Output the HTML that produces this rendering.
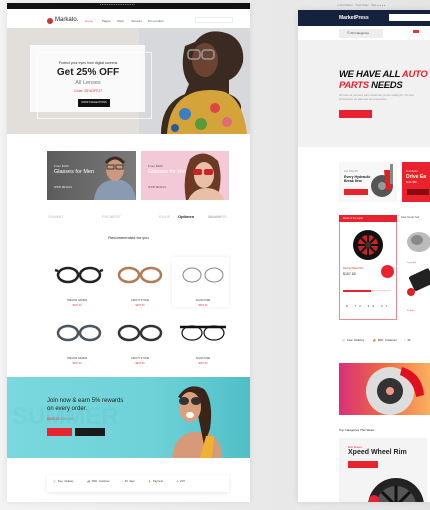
<!DOCTYPE html>
<html><head><meta charset="utf-8"><style>
*{margin:0;padding:0;box-sizing:border-box}
body{width:430px;height:510px;overflow:hidden;background:linear-gradient(90deg,#f3f3f3,#e9e9e9 60%,#e4e4e4);font-family:"Liberation Sans",sans-serif;position:relative}
.a{position:absolute}
.t{position:absolute;white-space:nowrap}
</style></head><body>
<div class="a" style="left:7px;top:3px;width:243px;height:499px;background:#fff;box-shadow:0 0 6px rgba(0,0,0,.08)"></div>
<div class="a" style="left:7px;top:3px;width:243px;height:6px;background:#111"></div>
<div class="t" style="left:100px;top:4px;font-size:2px;color:#ccc">● ● ● ● ●  ● ● ● ● ● ● ●   ● ● ● ● ● ● ● ●</div>
<div class="a" style="left:47px;top:18px;width:6px;height:6px;border-radius:50%;background:#c33"></div>
<div class="t" style="left:55px;top:17px;font-size:6px;color:#222">Markato.</div>
<div class="t" style="left:85px;top:19px;font-size:3px;color:#e55">Home</div>
<div class="t" style="left:102px;top:19px;font-size:3px;color:#555">Pages</div>
<div class="t" style="left:117px;top:19px;font-size:3px;color:#555">Shop</div>
<div class="t" style="left:131px;top:19px;font-size:3px;color:#555">Vendors</div>
<div class="t" style="left:148px;top:19px;font-size:3px;color:#555">Pro product</div>
<div class="a" style="left:195px;top:17px;width:38px;height:6px;border:1px solid #eee"></div>
<div class="a" style="left:7px;top:28px;width:132px;height:106px;background:#e2dfdb"></div>
<div class="a" style="left:139px;top:28px;width:111px;height:106px;background:#d6d8db"></div>
<svg class="a" style="left:155px;top:28px" width="95" height="106">
<path d="M40 14 q12-16 34-8 q16 8 14 28 q-4 14-14 18 l0 14 q10 4 12 12 l0 28 -80 0 q0-30 24-40 l4-10 q-10-14-4-38z" fill="#3a2a22"/>
<ellipse cx="50" cy="32" rx="13" ry="17" fill="#6b4330"/>
<path d="M12 106 q2-34 28-42 q16-4 30 0 q18 8 22 42z" fill="#d4a43a"/>
<circle cx="30" cy="86" r="6" fill="#3a7fc0"/><circle cx="60" cy="80" r="5" fill="#d44"/><circle cx="46" cy="96" r="6" fill="#5a9a3a"/><circle cx="72" cy="94" r="5" fill="#e06a7a"/><circle cx="20" cy="100" r="4" fill="#2a5a9a"/>
<rect x="33" y="22" width="12" height="9" rx="3" fill="none" stroke="#999" stroke-width="1.5"/><rect x="47" y="22" width="12" height="9" rx="3" fill="none" stroke="#999" stroke-width="1.5"/>
</svg>
<div class="a" style="left:30px;top:45px;width:115px;height:67px;background:rgba(255,255,255,.85)"></div>
<div class="a" style="left:37px;top:52px;width:115px;height:67px;border:1px solid rgba(255,255,255,.7)"></div>
<div class="t" style="left:0;width:176px;text-align:center;top:61px;font-size:3.5px;color:#333">Protect your eyes from digital screens</div>
<div class="t" style="left:0;width:176px;text-align:center;top:67px;font-size:10px;font-weight:bold;color:#222">Get 25% OFF</div>
<div class="t" style="left:0;width:176px;text-align:center;top:80px;font-size:5.5px;color:#777">All Lenses</div>
<div class="t" style="left:0;width:176px;text-align:center;top:89px;font-size:3.5px;color:#e33">Code: 25%OFF27</div>
<div class="a" style="left:78px;top:99px;width:32px;height:8px;background:#111"></div>
<div class="t" style="left:78px;width:32px;text-align:center;top:101px;font-size:2.5px;color:#fff">SHOP COLLECTIONS</div>
<div class="a" style="left:47px;top:151px;width:89px;height:49px;background:linear-gradient(90deg,#5c5c5c,#7a7a7a)"></div>
<svg class="a" style="left:90px;top:151px" width="46" height="49"><path d="M4 49 q2-18 18-20 l10 0 q12 4 14 20z" fill="#8a9ab0"/><ellipse cx="25" cy="18" rx="9" ry="12" fill="#c99a80"/><path d="M16 12 q9-10 18 0" stroke="#3a2a20" stroke-width="3" fill="none"/><rect x="17" y="14" width="7" height="4" fill="none" stroke="#222" stroke-width=".8"/><rect x="26" y="14" width="7" height="4" fill="none" stroke="#222" stroke-width=".8"/></svg>
<div class="t" style="left:54px;top:164px;font-size:3px;color:#eee">From $100</div>
<div class="t" style="left:54px;top:169px;font-size:5.5px;color:#fff">Glasses for Men</div>
<div class="t" style="left:54px;top:186px;font-size:2.5px;color:#eee">SHOP DETAILS</div>
<div class="a" style="left:141px;top:151px;width:88px;height:49px;background:#f3c8d7"></div>
<svg class="a" style="left:180px;top:151px" width="49" height="49"><path d="M10 8 q14-12 28 2 q6 20-2 39 l-30 0 q-4-22 4-41z" fill="#6a3a22"/><ellipse cx="24" cy="24" rx="10" ry="13" fill="#e8c0a8"/><path d="M8 49 q6-12 18-12 q14 0 18 12z" fill="#e8c0a8"/><rect x="13" y="18" width="9" height="6" rx="2" fill="#c22"/><rect x="24" y="18" width="9" height="6" rx="2" fill="#c22"/></svg>
<div class="t" style="left:148px;top:164px;font-size:3px;color:#555">From $100</div>
<div class="t" style="left:148px;top:169px;font-size:5.5px;color:#fff">Glasses for Her</div>
<div class="t" style="left:148px;top:186px;font-size:2.5px;color:#555">SHOP DETAILS</div>
<div class="t" style="left:48px;top:214px;font-size:4px;color:#bbb;word-spacing:18px">SUMMIT &nbsp;PROBEST &nbsp;ELVIS &nbsp;Aframe</div>
<div class="t" style="left:178px;top:214px;font-size:4px;color:#222;font-weight:bold">Optimen</div>
<div class="t" style="left:208px;top:214px;font-size:4px;color:#bbb">BLADERS</div>
<div class="t" style="left:0;width:257px;text-align:center;top:235px;font-size:4px;color:#222">Recommended for you</div>
<svg class="a" style="left:7px;top:255px" width="243" height="120">
<g fill="none" stroke-width="2.5">
<g stroke="#222"><ellipse cx="61" cy="20" rx="10" ry="7"/><ellipse cx="83" cy="20" rx="10" ry="7"/><path d="M71 19h2M51 16l-3-1M93 16l3-1"/></g>
<g stroke="#b47a55"><ellipse cx="122" cy="20" rx="10" ry="7"/><ellipse cx="144" cy="20" rx="10" ry="7"/><path d="M132 19h2"/></g>
<g stroke="#888" stroke-width="1"><ellipse cx="185" cy="20" rx="9" ry="7"/><ellipse cx="207" cy="20" rx="9" ry="7"/></g>
<g stroke="#4a5560"><ellipse cx="61" cy="78" rx="10" ry="7"/><ellipse cx="83" cy="78" rx="10" ry="7"/></g>
<g stroke="#333"><ellipse cx="122" cy="78" rx="10" ry="7"/><ellipse cx="144" cy="78" rx="10" ry="7"/></g>
<g stroke="#111"><path d="M173 72h46"/><ellipse cx="185" cy="78" rx="10" ry="7" stroke-width="1.2"/><ellipse cx="207" cy="78" rx="10" ry="7" stroke-width="1.2"/></g>
</g>
<g font-size="2.5" text-anchor="middle" fill="#444"><text x="70" y="46">TREVOR GAMMA</text><text x="133" y="46">GROUT STONE</text><text x="196" y="46">SIGNATURE</text><text x="70" y="104">TREVOR GAMMA</text><text x="133" y="104">GROUT STONE</text><text x="196" y="104">SIGNATURE</text></g>
<g font-size="2.5" text-anchor="middle" fill="#e33"><text x="70" y="51">$297.00</text><text x="133" y="51">$297.00</text><text x="196" y="51">$297.00</text><text x="70" y="109">$297.00</text><text x="133" y="109">$297.00</text><text x="196" y="109">$297.00</text></g>
</svg>
<div class="a" style="left:172px;top:257px;width:57px;height:50px;box-shadow:0 0 4px rgba(0,0,0,.08)"></div>
<div class="a" style="left:7px;top:377px;width:243px;height:81px;background:linear-gradient(90deg,#7ad8de,#6ed2d8 60%,#4fbfc6)"></div>
<div class="t" style="left:12px;top:403px;font-size:24px;font-weight:bold;color:rgba(0,80,90,.04)">SUMMER</div>
<svg class="a" style="left:150px;top:377px" width="80" height="81"><path d="M22 81 q2-22 20-26 l14 0 q16 6 16 26z" fill="#d79a78"/><path d="M28 20 q10-16 26-8 q10 12 6 40 l-6 16 -8 -40z" fill="#3a2418"/><ellipse cx="40" cy="30" rx="11" ry="15" fill="#d9a080"/><ellipse cx="34" cy="24" rx="5" ry="4" fill="#333"/><ellipse cx="46" cy="24" rx="5" ry="4" fill="#333"/><ellipse cx="40" cy="38" rx="4" ry="3" fill="#fff"/><path d="M50 81 l6-22 8 0 -2 22z" fill="#f0b030"/></svg>
<div class="t" style="left:47px;top:397px;font-size:6px;color:#222;line-height:8px">Join now &amp; earn 5% rewards<br>on every order.</div>
<div class="t" style="left:47px;top:417px;font-size:3.5px;color:#e33">$340.00 <span style="color:#888">$400.00</span></div>
<div class="a" style="left:47px;top:428px;width:25px;height:8px;background:#e8222f"></div>
<div class="a" style="left:75px;top:428px;width:30px;height:8px;background:#1a1a1a"></div>
<div class="a" style="left:47px;top:475px;width:182px;height:17px;background:#fff;box-shadow:0 1px 4px rgba(0,0,0,.1)"></div>
<div class="t" style="left:53px;top:480px;font-size:2.5px;color:#333;word-spacing:1px">🛒 Free Delivery &nbsp;&nbsp;&nbsp;&nbsp;&nbsp;&nbsp; 🚚 99% Customer &nbsp;&nbsp;&nbsp;&nbsp;&nbsp; ∩ 30 days &nbsp;&nbsp;&nbsp;&nbsp;&nbsp;&nbsp; ✋ Payment &nbsp;&nbsp;&nbsp;&nbsp;&nbsp;&nbsp; ◇ 24/7</div>

<div class="a" style="left:298px;top:10px;width:132px;height:492px;background:#fff;box-shadow:0 0 6px rgba(0,0,0,.1)"></div>
<div class="t" style="left:337px;top:4px;font-size:2.5px;color:#888">⊙ Find Stores &nbsp;&nbsp; Track Order &nbsp;&nbsp; Help ● ● ● ●</div>
<div class="a" style="left:298px;top:10px;width:132px;height:16px;background:#14223d"></div>
<div class="t" style="left:339px;top:15px;font-size:5px;font-weight:bold;color:#fff">MarketPress</div>
<div class="a" style="left:389px;top:14px;width:41px;height:7px;background:#fff"></div>
<div class="a" style="left:339px;top:29px;width:44px;height:9px;background:#eee"></div>
<div class="t" style="left:347px;top:31px;font-size:3px;color:#444">☰ All Categories</div>
<div class="a" style="left:413px;top:30px;width:6px;height:3px;background:#e33"></div>
<div class="a" style="left:298px;top:40px;width:132px;height:107px;background:#f1f1f1"></div>
<div class="t" style="left:339px;top:69px;font-size:9.5px;font-weight:900;font-style:italic;color:#111;line-height:11px;letter-spacing:-.3px">WE HAVE ALL <span style="color:#e8222f">AUTO</span><br><span style="color:#e8222f">PARTS</span> NEEDS</div>
<div class="t" style="left:339px;top:94px;font-size:2.5px;color:#999;line-height:4px">We have all your auto parts needs that you are looking for. The best<br>performance car parts and car accessories.</div>
<div class="a" style="left:339px;top:110px;width:33px;height:8px;background:#e8222f"></div>
<div class="a" style="left:339px;top:162px;width:58px;height:40px;background:#f7f7f7"></div>
<div class="t" style="left:344px;top:170px;font-size:2.5px;color:#888">Get 10% Off</div>
<div class="t" style="left:344px;top:175px;font-size:3.5px;font-weight:bold;color:#222;line-height:4px">Every Hydraulic<br>Break Item</div>
<div class="a" style="left:344px;top:189px;width:24px;height:6px;background:#e8222f"></div>
<svg class="a" style="left:370px;top:162px" width="27" height="40"><circle cx="12" cy="24" r="11" fill="#555"/><circle cx="12" cy="24" r="4" fill="#999"/><path d="M14 8 l8 0 0 20 -6 0z" fill="#d22"/><rect x="20" y="2" width="3" height="20" fill="#888"/></svg>
<div class="a" style="left:402px;top:162px;width:28px;height:40px;background:#e8222f"></div>
<div class="t" style="left:406px;top:170px;font-size:2.5px;color:#fcc">Find Better</div>
<div class="t" style="left:406px;top:174px;font-size:5px;font-weight:bold;color:#ffd">Drive Ea</div>
<div class="t" style="left:406px;top:181px;font-size:2.5px;color:#fff">From $50</div>
<div class="a" style="left:407px;top:189px;width:22px;height:6px;background:#8a0a10"></div>
<div class="a" style="left:339px;top:215px;width:58px;height:105px;border:1px solid #f08a90"></div>
<div class="a" style="left:339px;top:215px;width:58px;height:7px;background:#e8222f"></div>
<div class="t" style="left:343px;top:217px;font-size:2.5px;color:#fff">Deals of the week</div>
<svg class="a" style="left:350px;top:226px" width="36" height="38"><circle cx="18" cy="19" r="15" fill="#111"/><circle cx="18" cy="19" r="10" fill="#c22"/><path d="M18 9v20M8 19h20M11 12l14 14M25 12l-14 14" stroke="#111" stroke-width="2"/><circle cx="18" cy="19" r="3" fill="#333"/></svg>
<div class="t" style="left:343px;top:267px;font-size:2.5px;color:#e33">Racing Wheel Rim</div>
<div class="t" style="left:343px;top:272px;font-size:3.5px;color:#333">$167.65</div>
<div class="a" style="left:381px;top:265px;width:13px;height:13px;border-radius:50%;background:#e8222f"></div>
<div class="a" style="left:343px;top:290px;width:48px;height:1px;background:#fcc"></div>
<div class="a" style="left:343px;top:290px;width:28px;height:1.5px;background:#e8222f"></div>
<div class="t" style="left:346px;top:304px;font-size:3px;color:#333;letter-spacing:3px">8 72 49 37</div>
<div class="t" style="left:401px;top:216px;font-size:2.5px;color:#555">Daily Deals! Sell</div>
<svg class="a" style="left:403px;top:226px" width="27" height="90"><ellipse cx="16" cy="16" rx="12" ry="10" fill="#bbb"/><ellipse cx="14" cy="14" rx="6" ry="5" fill="#888"/><rect x="8" y="47" width="22" height="16" rx="2" fill="#222" transform="rotate(-25 16 55)"/><circle cx="8" cy="66" r="4" fill="#d22"/></svg>
<div class="t" style="left:407px;top:262px;font-size:2px;color:#e33">Cross Bolt</div>
<div class="t" style="left:407px;top:310px;font-size:2px;color:#e33">Kit Extra</div>
<div class="t" style="left:342px;top:338px;font-size:2.7px;color:#222;word-spacing:1px"><span style="color:#e33">🛒</span> Free Delivery &nbsp;&nbsp;&nbsp; <span style="color:#e33">🚚</span> 99% Customer &nbsp;&nbsp; <span style="color:#e33">∩</span> 30</div>
<div class="a" style="left:339px;top:363px;width:91px;height:52px;background:linear-gradient(90deg,#d8307a,#f06a40 50%,#f8b060)"></div>
<svg class="a" style="left:350px;top:363px" width="80" height="52"><circle cx="40" cy="28" r="24" fill="#ddd"/><circle cx="40" cy="28" r="13" fill="#333"/><circle cx="40" cy="28" r="4" fill="#e98"/><path d="M52 4 q20 6 22 28 l-8 2 q-2-16-16-22z" fill="#e01020"/></svg>
<div class="t" style="left:339px;top:428px;font-size:3px;color:#222">Top Categories This Week</div>
<div class="a" style="left:339px;top:438px;width:88px;height:64px;background:#f4f4f4"></div>
<div class="t" style="left:348px;top:446px;font-size:2.5px;color:#e33">Best Dealers</div>
<div class="t" style="left:348px;top:449px;font-size:7px;font-weight:bold;color:#222">Xpeed Wheel Rim</div>
<div class="a" style="left:348px;top:461px;width:30px;height:7px;background:#e8222f"></div>
<svg class="a" style="left:360px;top:470px" width="67" height="32"><circle cx="36" cy="36" r="28" fill="#222"/><circle cx="36" cy="36" r="20" fill="#555"/><path d="M36 16v40M16 36h40M22 22l28 28M50 22l-28 28" stroke="#111" stroke-width="3"/><circle cx="14" cy="30" r="5" fill="#e8222f"/></svg>
</body></html>
